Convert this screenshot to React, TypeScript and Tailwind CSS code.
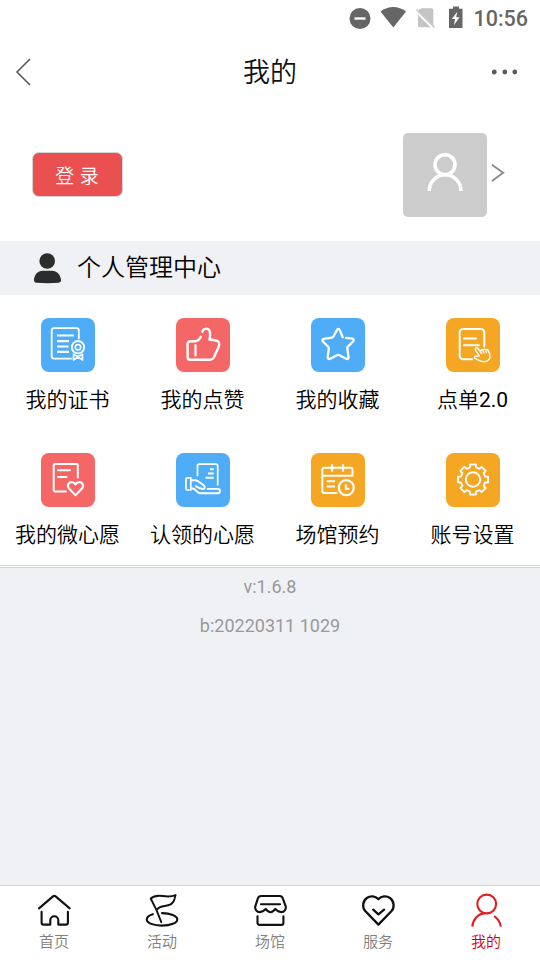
import type { ReactNode } from 'react';
import clsx from 'clsx';

type MenuItem = { label: string; suffix?: string; color: string; icon: ReactNode };
type TabItem = { label: string; icon: ReactNode; active?: boolean };

// gear outline with 8 teeth, centred in the 54px tile
const gearPath = () => {
  const pt = (r: number, deg: number) => {
    const a = (deg * Math.PI) / 180;
    return `${(27 + r * Math.sin(a)).toFixed(2)} ${(27 - r * Math.cos(a)).toFixed(2)}`;
  };
  const points: string[] = [];
  for (let i = 0; i < 8; i++) {
    const c = i * 45;
    points.push(pt(12.4, c - 14), pt(15.3, c - 11), pt(15.3, c + 11), pt(12.4, c + 14));
  }
  return `M${points.join('L')}Z`;
};

const menus: MenuItem[] = [
  {
    label: '我的证书',
    color: 'bg-[#4fadf8]',
    icon: (
      <>
        <path d="M37.8 21V13a2.3 2.3 0 0 0-2.3-2.3H13a2.3 2.3 0 0 0-2.3 2.3v26A2.3 2.3 0 0 0 13 41.2h17" strokeWidth="1.8" />
        <path d="M16 18h17M16 23.7h12M16 29h11.5M16 34.3h12" strokeLinecap="butt" strokeWidth="2.2" />
        <circle cx="37" cy="29.7" r="6.2" strokeWidth="1.9" />
        <circle cx="37" cy="29.7" r="2.7" strokeWidth="1.6" />
        <path d="M32.5 36.5v6l4.5-3 4.5 3v-6M32.5 37l4.5 2 4.5-2" strokeWidth="1.6" />
      </>
    ),
  },
  {
    label: '我的点赞',
    color: 'bg-[#f56767]',
    icon: (
      <>
        <path d="M24.8 19.300c-1.300 3-2.300 4.300-5.800 4.500h-4.500a3 3 0 0 0-3 3L11.700 40a2.200 2.200 0 0 0 2.200 2.200H34c2 0 3-.7 3.800-2.200l4.800-10.500c1.700-4.200.2-6-3.600-6.700l-5.500-.8c.8-4 1-7.300-.3-9.300-1.700-2.500-6.200-1.700-6.800 1.600" strokeWidth="2.400" />
        <path d="M19.500 27.500V38" strokeWidth="2.200" />
      </>
    ),
  },
  {
    label: '我的收藏',
    color: 'bg-[#4fadf8]',
    icon: (
      <path d="M31.700 19.700 28.800 12.600c-.6-1.500-2.200-1.500-2.900 0L22.400 19c-.4.700-1 1.100-1.800 1.200l-7.700 1.200c-1.600.3-2 1.500-1 2.600l5.300 5.200c.5.600.7 1.100.6 1.900l-1.100 8.600c-.1 1.600 1 2.300 2.400 1.600l6.900-3.600c.8-.4 1.500-.4 2.300 0l6.900 3.600c1.400.7 2.500-.1 2.300-1.600L36.300 31c-.1-.8.1-1.400.6-1.900l5.300-5.400c1-1.100.6-2.300-1-2.600l-6.100-.8" strokeWidth="2.300" />
    ),
  },
  {
    label: '点单',
    suffix: '2.0',
    color: 'bg-[#f5a623]',
    icon: (
      <>
        <path d="M38.300 29V15a3.500 3.500 0 0 0-3.500-3.500H17.200a3.500 3.500 0 0 0-3.500 3.500v23.200a3.500 3.500 0 0 0 3.500 3.500h9" strokeWidth="2" />
        <path d="M18 21h12M18 27.700h15" strokeWidth="2" />
        <path d="M33.300 38.200 29.600 33c-1-2 .9-3.500 2.300-2l2.700 3.300c-.7-2.200 1.600-2.700 2.400-1.300.1-1.800 2.200-1.800 2.700-.2.5-1.300 2.300-1 2.600.5 1.800 3.400 2.700 5.600.9 8.300-2.100 3.300-6.600 3-9.600 1.600l-4.300-2.100c-1.500-1.200-.6-2.400.9-2.300zM34.600 34.300l1 1.800M37 33l1 2.400M39.700 32.800l.8 2.400" strokeWidth="1.400" />
      </>
    ),
  },
  {
    label: '我的微心愿',
    color: 'bg-[#f56767]',
    icon: (
      <>
        <path d="M36.800 25V12.700a1.200 1.200 0 0 0-1.200-1.200H13.900a1.200 1.200 0 0 0-1.200 1.200v25.100a1.200 1.200 0 0 0 1.200 1.200H25" strokeWidth="2" />
        <path d="M17 17.800h12M17 24.500h8.500" strokeWidth="2.100" />
        <path d="M34.500 42.700 28 36c-2.700-3.300.2-6.800 3.200-6.300 1.600.2 2.600 1 3.300 2.200.7-1.200 1.700-2 3.300-2.200 3-.5 5.900 3 3.200 6.300z" strokeWidth="2.100" />
      </>
    ),
  },
  {
    label: '认领的心愿',
    color: 'bg-[#4fadf8]',
    icon: (
      <>
        <path d="M21.500 23V13.300a1.700 1.700 0 0 1 1.700-1.700H40a1.700 1.700 0 0 1 1.700 1.700v19" strokeWidth="1.700" />
        <path d="M34 16.800h3.700M32 21h5.700M29.500 25.300h8.200" strokeLinecap="butt" strokeWidth="1.900" />
        <path d="M11.300 25.300h3.500v12.200h-3.500a1.300 1.300 0 0 1-1.300-1.300v-9.600a1.300 1.300 0 0 1 1.300-1.300z" strokeWidth="1.700" />
        <path d="M15 27.700h4.200c1 0 1.800.3 2.500.8l5.300 3.800c2.300 1.600 2.200 3.800.3 4.200-2.800.3-5.300-1.400-7.500-2.800M15 36h1.500c1 0 1.500.3 2.300 1l3.400 3c.7.6 1.300.8 2.300.8h17c3.300 0 3.300-4.300.4-4.400H31.500" strokeWidth="1.900" />
      </>
    ),
  },
  {
    label: '场馆预约',
    color: 'bg-[#f5a623]',
    icon: (
      <>
        <path d="M25.500 40.500H13.300a2 2 0 0 1-2-2V17.300a2 2 0 0 1 2-2h26.200a2 2 0 0 1 2 2v6H11.500" strokeWidth="2" />
        <path d="M21 11.700v7.600M32 11.700v7.600" strokeLinecap="butt" strokeWidth="2.200" />
        <path d="M15.700 28.800H24M15.700 34H24" strokeLinecap="butt" strokeWidth="2" />
        <circle cx="35.300" cy="35.100" r="7.500" strokeWidth="2.200" />
        <path d="M34.800 31.800v4.500h3.500" strokeLinecap="butt" strokeLinejoin="miter" strokeWidth="2" />
      </>
    ),
  },
  {
    label: '账号设置',
    color: 'bg-[#f5a623]',
    icon: (
      <>
        <path d={gearPath()} strokeWidth="1.900" />
        <circle cx="27" cy="27" r="7.200" strokeWidth="1.900" />
      </>
    ),
  },
];

const tabs: TabItem[] = [
  {
    label: '首页',
    icon: (
      <path d="M3 16.400 17 4.400a2 2 0 0 1 2.600 0l14.100 12M5.600 19.800v11a1.800 1.800 0 0 0 1.800 1.800h6.900v-4.300a4 4 0 0 1 8 0v4.300h7.800a1.800 1.800 0 0 0 1.800-1.800v-11" />
    ),
  },
  {
    label: '活动',
    icon: (
      <>
        <path d="m17.300 30.200-4.800-12L6.700 6.500c3.800-3.600 7.800-3.100 12-2.500 4.200.7 8.500.9 12.900-.9-.5 1-.7 2-.9 3.300-1.400 6.300-6 7-10 7.600-3.700.5-6.200 1.200-8 4" strokeWidth="1.900" />
        <path d="M8.800 22.200c-3.900 1.200-6 3-6 5.200 0 3.600 6.600 6.200 15.200 6.200s15.300-2.700 15.300-6.200-6.800-6.300-15.300-6.300" />
      </>
    ),
  },
  {
    label: '场馆',
    icon: (
      <>
        <path d="M9.200 4h18.400c1.500 0 2.700.8 3.200 2.400l2.900 8c.7 2.900-1.400 5.700-4.500 5.700-2.500 0-4.300-1.300-5.900-3.200-1.500 2.100-3 3.300-4.800 3.300s-3.300-1.200-4.800-3.300c-1.600 1.900-3.400 3.200-5.900 3.200-3.100 0-5.200-2.800-4.500-5.700L5.900 6.400C6.400 4.800 7.500 4 9.200 4z" />
        <path d="M9 12.300h19M5.500 24.300v6.600a2 2 0 0 0 2 2h21.900a2 2 0 0 0 2-2v-6.600" />
      </>
    ),
  },
  {
    label: '服务',
    icon: (
      <>
        <path d="M18.400 32.600 5.500 19.300C1.800 15.300 2.700 9 6.800 6c3.700-2.600 8.500-2 11.600 1.100C21.500 4 26.300 3.400 30 6c4.100 3 5 9.300 1.300 13.300z" strokeWidth="2.300" />
        <path d="m13.200 17.700 5.200 4.700 5.700-4.700" strokeWidth="2.300" />
      </>
    ),
  },
  {
    label: '我的',
    active: true,
    icon: (
      <>
        <circle cx="18.700" cy="12" r="9.400" />
        <path d="M4.300 34.700c.7-7.500 5.800-13.200 12.700-13.300M26.200 24.200c3.600 2.400 5.900 6.100 6.600 10.500" strokeLinecap="butt" />
      </>
    ),
  },
];

function StatusBar() {
  return (
    <div className="flex h-9 items-center justify-end pr-3 text-[#666]">
      <svg width="125" height="36" viewBox="0 0 125 36" fill="currentColor">
        <circle cx="20" cy="18.500" r="10.500" />
        <path d="M14.500 18.500h11" stroke="#fff" strokeWidth="2.400" />
        <path d="M40.500 11.500C48 5.500 58.500 5.500 66 11.500L53.300 27.500z" />
        <path d="M81.300 8.200h10a2 2 0 0 1 2 2v15.500L78 10.500zM78 14.700l12.700 12.600H80a2 2 0 0 1-2-2z" fill="#c4c4c4" />
        <path d="m76.500 9.500 18 18" stroke="#c4c4c4" strokeWidth="1.600" />
        <path d="M113 6.500h6v2.200h3.500v19.200h-13.500V8.700h4z" />
        <path d="m117.300 11.800-5.500 7.300h3.300l-1.200 6.200 5.700-8h-3.400z" fill="#fff" />
      </svg>
      <span className="ml-2 pt-0.5 text-[21.500px] leading-none font-medium">10:56</span>
    </div>
  );
}

function NavBar() {
  return (
    <header className="flex h-[72px] items-center justify-between pr-[22px] pl-[15px]">
      <svg className="mb-px" width="32" height="28" viewBox="0 0 32 28" fill="none" stroke="#555" strokeWidth="1.500">
        <path d="M15 1 2 14l13 13" />
      </svg>
      <h1 className="pt-0.5 pl-px text-[27px] leading-none font-[350] text-[#111]">我的</h1>
      <svg width="26" height="6" viewBox="0 0 26 6" fill="#5a5a55">
        <circle cx="2.300" cy="3" r="2.400" />
        <circle cx="12.800" cy="3" r="2.400" />
        <circle cx="22.800" cy="3" r="2.400" />
      </svg>
    </header>
  );
}

export default function App() {
  return (
    <div className="flex h-[960px] w-[540px] flex-col overflow-hidden bg-[#f0f1f5] font-['Roboto','Noto_Sans_CJK_SC',sans-serif]">
      <div className="bg-white">
        <StatusBar />
        <NavBar />

        {/* 登录 / 头像 */}
        <section className="flex h-[133px] items-center justify-between pt-0.5 pr-[35px] pb-0.5 pl-8">
          <button className="h-[45px] w-[91px] rounded-[7px] border border-[#d3d3d3] bg-[#ea5050] pt-[3px] pr-px text-[19px] leading-none font-[350] [word-spacing:1px] text-white">
            登 录
          </button>
          <div className="flex items-center gap-1">
            <div className="mt-px h-[84px] w-[84px] rounded-[5px] bg-[#ccc]">
              <svg width="84" height="84" viewBox="0 0 84 84" fill="none" stroke="#fff" strokeWidth="3.600">
                <circle cx="42" cy="31.700" r="10" />
                <path d="M26.200 58a15.900 16.300 0 0 1 31.800 0" />
              </svg>
            </div>
            <svg className="mb-[3px]" width="14" height="20" viewBox="0 0 14 20" fill="none" stroke="#888" strokeWidth="1.800">
              <path d="m1 1.700 11.200 8L1 18" />
            </svg>
          </div>
        </section>
      </div>

      {/* 个人管理中心 */}
      <div className="flex h-[54px] items-center gap-[15px] pl-[34px]">
        <svg width="27" height="32" viewBox="0 0 27 32" fill="#2c2c2c">
          <circle cx="13.200" cy="9" r="7.800" />
          <path d="M0 27.500c.6-5.300 3.800-8.800 8.500-8.800h9.600c4.700 0 8.200 3.500 8.900 8.800.3 2-.7 3-2.500 3.200-7.300.6-14.700.6-22 0C.6 30.500-.2 29.500 0 27.500z" />
        </svg>
        <h2 className="pb-px pl-px text-[24px] leading-none font-[350] text-black">个人管理中心</h2>
      </div>

      <section className="grid h-[271px] grid-cols-4 border-b border-[#d4d4d4] bg-white">
        {menus.map((item) => (
          <div key={item.label} className="flex h-[135px] flex-col items-center pt-[23px]">
            <div className={clsx('h-[54px] w-[54px] rounded-[8px]', item.color)}>
              <svg width="54" height="54" viewBox="0 0.5 54 54" fill="none" stroke="#fff" strokeLinecap="round" strokeLinejoin="round">
                {item.icon}
              </svg>
            </div>
            <span className="mt-[18px] text-[21px] leading-[21px] font-[350] whitespace-nowrap text-black">
              {item.label}
              {item.suffix && <span className="font-normal">{item.suffix}</span>}
            </span>
          </div>
        ))}
      </section>

      {/* 版本信息 */}
      <main className="flex-1 border-t border-white text-center text-[18px] text-[#999]">
        <div className="border-t border-[#d4d4d4] pt-[5px]">
          <p className="leading-[27px]">v:1.6.8</p>
          <p className="mt-3 leading-[27px]">b:20220311 1029</p>
        </div>
      </main>

      <nav className="grid h-[75px] grid-cols-5 border-t border-[#d3d4d8] bg-white">
        {tabs.map((tab) => (
          <div
            key={tab.label}
            className={clsx('flex flex-col items-center pt-1.5', tab.active ? 'text-[#d0021b]' : 'text-[#808080]')}
          >
            <svg
              width="36"
              height="36"
              viewBox="0 0 36 36"
              fill="none"
              stroke={tab.active ? '#e02020' : '#111'}
              strokeWidth="2.100"
              strokeLinecap="round"
              strokeLinejoin="round"
            >
              {tab.icon}
            </svg>
            <span className="mt-[7px] text-[15px] leading-[15px] font-[350]">{tab.label}</span>
          </div>
        ))}
      </nav>
    </div>
  );
}
